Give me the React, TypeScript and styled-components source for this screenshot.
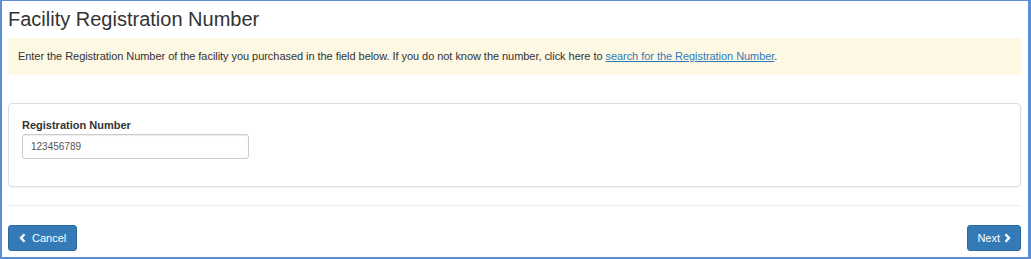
import React from "react";
import styled, { createGlobalStyle } from "styled-components";

const Global = createGlobalStyle`
  html, body { margin: 0; padding: 0; background: #ffffff; }
  body { font-family: "Liberation Sans", Arial, Helvetica, sans-serif; color: #333333; }
  * { box-sizing: border-box; }
`;

const Frame = styled.div`
  width: 1031px;
  height: 259px;
  border-style: solid;
  border-color: #5b8ed6;
  border-width: 1px 3px 2px 2px;
  background: #ffffff;
  padding: 0 7px 0 6px;
  display: flex;
  flex-direction: column;
`;

const Title = styled.h1`
  margin: 6px 0 0 0;
  font-size: 20px;
  font-weight: 400;
  line-height: 24px;
  color: #333333;
`;

const Alert = styled.div`
  margin-top: 7px;
  background: #fcf8e3;
  padding: 11px 10px 11px 10px;
  font-size: 11px;
  line-height: 15px;
  letter-spacing: -0.05px;
  color: #333333;
`;

const Link = styled.a`
  color: #337ab7;
  text-decoration: underline;
  cursor: pointer;
`;

const Panel = styled.div`
  margin-top: 28px;
  border: 1px solid #dddddd;
  border-radius: 4px;
  box-shadow: 0 1px 1px rgba(0, 0, 0, 0.05);
  padding: 14px 13px 26px 13px;
  height: 84px;
`;

const Label = styled.label`
  display: block;
  font-size: 11px;
  font-weight: 700;
  line-height: 14px;
  margin-bottom: 2px;
  color: #333333;
`;

const Input = styled.input`
  display: block;
  width: 227px;
  height: 25px;
  border: 1px solid #cccccc;
  border-radius: 3px;
  padding: 0 8px;
  font-family: "Liberation Sans", Arial, sans-serif;
  font-size: 10px;
  color: #555555;
  box-shadow: inset 0 1px 1px rgba(0, 0, 0, 0.075);
  outline: none;
`;

const Rule = styled.hr`
  margin: 18px 0 0 0;
  border: 0;
  border-top: 1px solid #eeeeee;
`;

const Footer = styled.div`
  margin-top: 19px;
  display: flex;
  justify-content: space-between;
`;

const Button = styled.button`
  display: inline-flex;
  align-items: center;
  gap: 6px;
  height: 26px;
  padding: 0 10px;
  background: #337ab7;
  border: 1px solid #2e6da4;
  border-radius: 3px;
  color: #ffffff;
  font-family: "Liberation Sans", Arial, sans-serif;
  font-size: 11px;
  cursor: pointer;
`;

const NextButton = styled(Button)`
  gap: 4px;
  padding: 0 9px 0 9px;
`;

const Chevron = ({ dir }: { dir: "left" | "right" }) => (
  <svg width="7" height="10" viewBox="0 0 7 10">
    <path
      d={dir === "left" ? "M5.5 1.2 L2 5 L5.5 8.8" : "M1.5 1.2 L5 5 L1.5 8.8"}
      fill="none"
      stroke="#ffffff"
      strokeWidth="2.4"
      strokeLinecap="butt"
      strokeLinejoin="miter"
    />
  </svg>
);

export default function App() {
  return (
    <>
      <Global />
      <Frame>
        <Title>Facility Registration Number</Title>
        <Alert>
          Enter the Registration Number of the facility you purchased in the field below. If you do not know the
          number, click here to <Link>search for the Registration Number</Link>.
        </Alert>
        <Panel>
          <Label htmlFor="regnum">Registration Number</Label>
          <Input id="regnum" defaultValue="123456789" />
        </Panel>
        <Rule />
        <Footer>
          <Button>
            <Chevron dir="left" />
            Cancel
          </Button>
          <NextButton>
            Next
            <Chevron dir="right" />
          </NextButton>
        </Footer>
      </Frame>
    </>
  );
}
